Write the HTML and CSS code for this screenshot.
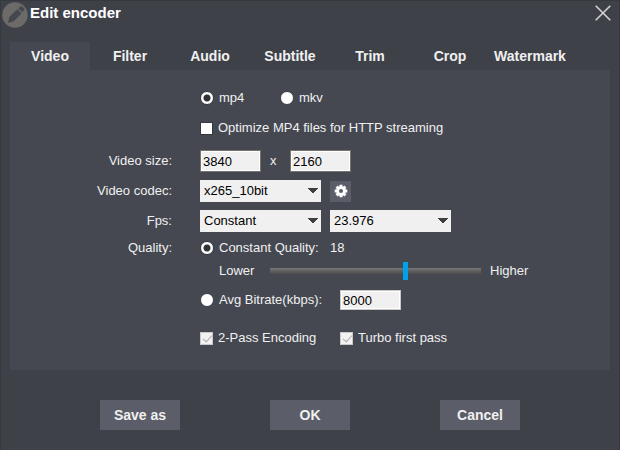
FILE: index.html
```html
<!DOCTYPE html>
<html lang="en">
<head>
<meta charset="utf-8">
<title>Edit encoder</title>
<link rel="stylesheet" href="styles.css">
</head>
<body>
<form class="dialog">
  <header class="titlebar">
    <svg class="logo" viewBox="0 0 26 26" aria-hidden="true">
      <circle cx="13" cy="13" r="12.700" fill="#6d6a6a"/>
      <path d="M6 20.800l1.200-5.800 8.300-7.700 4.100 4.200-8.100 8zM16.400 6.500l2-2c.5-.5 1.100-.5 1.600 0l2 2c.5.5.5 1.100 0 1.600l-1.600 2.100z" fill="#44474e"/>
    </svg>
    <h1 class="title">Edit encoder</h1>
    <button type="button" class="close" aria-label="Close">
      <svg viewBox="0 0 16 16" width="16" height="16"><path d="M.7.700l14.600 14.600M15.300.700L.7 15.300" stroke="#d2d2d2" stroke-width="1.600" fill="none"/></svg>
    </button>
  </header>

  <nav class="tabs" role="tablist">
    <button type="button" role="tab" class="tab tab-active" aria-selected="true">Video</button>
    <button type="button" role="tab" class="tab">Filter</button>
    <button type="button" role="tab" class="tab">Audio</button>
    <button type="button" role="tab" class="tab">Subtitle</button>
    <button type="button" role="tab" class="tab">Trim</button>
    <button type="button" role="tab" class="tab">Crop</button>
    <button type="button" role="tab" class="tab">Watermark</button>
  </nav>

  <main class="panel">
    <div class="group group-format">
      <div class="row">
        <div class="fields">
          <label class="choice choice-short"><input type="radio" name="format" checked>mp4</label>
          <label class="choice"><input type="radio" name="format">mkv</label>
        </div>
      </div>
      <div class="row">
        <div class="fields">
          <label class="choice"><input type="checkbox">Optimize MP4 files for HTTP streaming</label>
        </div>
      </div>
    </div>

    <div class="group">
      <div class="row">
        <label class="name" for="width">Video size:</label>
        <div class="fields">
          <input class="number" id="width" type="text" value="3840">
          <span class="times">x</span>
          <input class="number" type="text" value="2160" aria-label="Video height">
        </div>
      </div>
      <div class="row">
        <label class="name" for="codec">Video codec:</label>
        <div class="fields fields-spaced">
          <select id="codec"><option>x265_10bit</option></select>
          <button type="button" class="gear" aria-label="Codec settings">
            <svg viewBox="-7 -7 14 14" width="14" height="14">
              <g stroke="#fff" stroke-width="3"><path d="M0-6.300V6.300M-6.300 0H6.300M-4.400-4.400L4.400 4.400M-4.400 4.400L4.400-4.400"/></g>
              <circle r="4.800" fill="#fff"/><circle r="2" fill="#5b5d68"/>
            </svg>
          </button>
        </div>
      </div>
      <div class="row">
        <label class="name" for="fps">Fps:</label>
        <div class="fields fields-spaced">
          <select id="fps"><option>Constant</option></select>
          <select aria-label="Frame rate"><option>23.976</option></select>
        </div>
      </div>
    </div>

    <div class="group">
      <div class="row row-compact">
        <span class="name">Quality:</span>
        <div class="fields">
          <label class="choice choice-quality"><input type="radio" name="quality" checked>Constant Quality:</label>
          <output>18</output>
        </div>
      </div>
      <div class="row row-slider">
        <div class="fields">
          <label class="lower" for="level">Lower</label>
          <input id="level" type="range" min="0" max="51" value="33">
          <span class="higher">Higher</span>
        </div>
      </div>
      <div class="row row-bitrate">
        <div class="fields">
          <label class="choice choice-wide"><input type="radio" name="quality">Avg Bitrate(kbps):</label>
          <input class="number number-flat" type="text" value="8000" aria-label="Average bitrate">
        </div>
      </div>
    </div>

    <div class="group group-passes">
      <div class="row">
        <div class="fields">
          <label class="choice choice-wide"><input type="checkbox" checked disabled>2-Pass Encoding</label>
          <label class="choice"><input type="checkbox" checked disabled>Turbo first pass</label>
        </div>
      </div>
    </div>
  </main>

  <footer class="actions">
    <button type="button" class="action">Save as</button>
    <button type="submit" class="action">OK</button>
    <button type="button" class="action">Cancel</button>
  </footer>
</form>
</body>
</html>
```
FILE: styles.css
```css
* {
  box-sizing: border-box;
}

body {
  margin: 0;
  background: #3f4149;
  color: #f0f0f0;
  font: 13px/16px "Liberation Sans", Arial, sans-serif;
}

button,
input,
select {
  margin: 0;
  padding: 0;
  border: 0;
  border-radius: 0;
  font: inherit;
  color: inherit;
}

svg {
  display: block;
}

.dialog {
  min-height: 100vh;
  border: 1px solid #363a3f;
  padding: 0 9px;
}

/* Title bar */
.titlebar {
  display: flex;
  align-items: center;
  height: 27px;
  margin: 0 -9px 14px;
  padding: 0 8px 0 1px;
}

.logo {
  width: 26px;
  height: 26px;
}

.title {
  flex: 1;
  margin: 0 0 0 2px;
  padding-bottom: 4px;
  font-size: 15px;
  line-height: 18px;
  color: #fff;
}

.close {
  padding-bottom: 3px;
  background: none;
}

/* Tabs */
.tabs {
  display: flex;
}

.tab {
  width: 80px;
  height: 28px;
  background: none;
  font-size: 14px;
  font-weight: bold;
}

.tab-active {
  background: #454850;
}

/* Settings panel */
.panel {
  display: flex;
  flex-direction: column;
  padding: 13px 0 17px;
  background: #454850;
}

.group-format {
  margin-bottom: 3px;
}

.group-passes {
  margin-top: 5px;
}

.row {
  display: grid;
  grid-template-columns: 162px 1fr;
  column-gap: 28px;
  align-items: center;
  height: 30px;
}

.row-compact {
  height: 24px;
}

.row-slider {
  height: 22px;
}

.row-bitrate {
  height: 36px;
}

.name {
  text-align: right;
}

.fields {
  grid-column: 2;
  display: flex;
  align-items: center;
}

.fields-spaced {
  gap: 9px;
}

.choice {
  display: flex;
  align-items: center;
  gap: 5px;
}

.choice-short {
  width: 80px;
}

.choice-quality {
  width: 130px;
}

.choice-wide {
  width: 140px;
}

input[type="radio"],
input[type="checkbox"] {
  appearance: none;
  width: 13px;
  height: 13px;
  border: 1px solid #35373c;
  background: #fff;
}

input[type="radio"] {
  width: 14px;
  height: 14px;
  border-color: #3c3e44;
  border-radius: 50%;
}

input[type="radio"]:checked {
  background: radial-gradient(circle, #303236 3px, #fff 4px);
}

input[type="checkbox"]:disabled {
  position: relative;
  border-color: #c9c9c9;
  background: #f2f2f2;
}

input[type="checkbox"]:disabled::after {
  content: "";
  position: absolute;
  left: 4px;
  top: 0;
  width: 4px;
  height: 8px;
  border: solid #aaa;
  border-width: 0 1px 1px 0;
  transform: rotate(42deg);
}

.number {
  width: 61px;
  height: 22px;
  padding: 0 2px;
  border: 1px solid #77736f;
  outline: 1px solid #fff;
  outline-offset: -2px;
  background: #f0f0f0;
  color: #000;
}

.number-flat {
  height: 20px;
  border-color: #c8c8c8;
}

.times {
  width: 29px;
  padding-left: 9px;
}

select {
  appearance: none;
  width: 121px;
  height: 22px;
  padding-left: 4px;
  background-color: #f0f0f0;
  background-image:
    linear-gradient(to bottom left, #433e3e 50%, transparent 50%),
    linear-gradient(to bottom right, #433e3e 50%, transparent 50%);
  background-size: 5px 6px;
  background-position: right 8px top 8px, right 3px top 8px;
  background-repeat: no-repeat;
  color: #000;
}

.gear {
  display: grid;
  place-items: center;
  width: 21px;
  height: 21px;
  background: #5b5d68;
}

.lower {
  width: 70px;
  padding-left: 19px;
}

.higher {
  padding-left: 9px;
}

input[type="range"] {
  appearance: none;
  width: 211px;
  height: 18px;
  background: linear-gradient(#777, #4b4b4b) center / 100% 6px no-repeat;
}

input[type="range"]::-webkit-slider-thumb {
  appearance: none;
  width: 5px;
  height: 18px;
  background: #00a2e8;
}

/* Bottom buttons */
.actions {
  display: flex;
  justify-content: space-between;
  padding: 30px 90px;
}

.action {
  width: 80px;
  height: 30px;
  background: #5b5d68;
  font-size: 14px;
  font-weight: bold;
}
```
